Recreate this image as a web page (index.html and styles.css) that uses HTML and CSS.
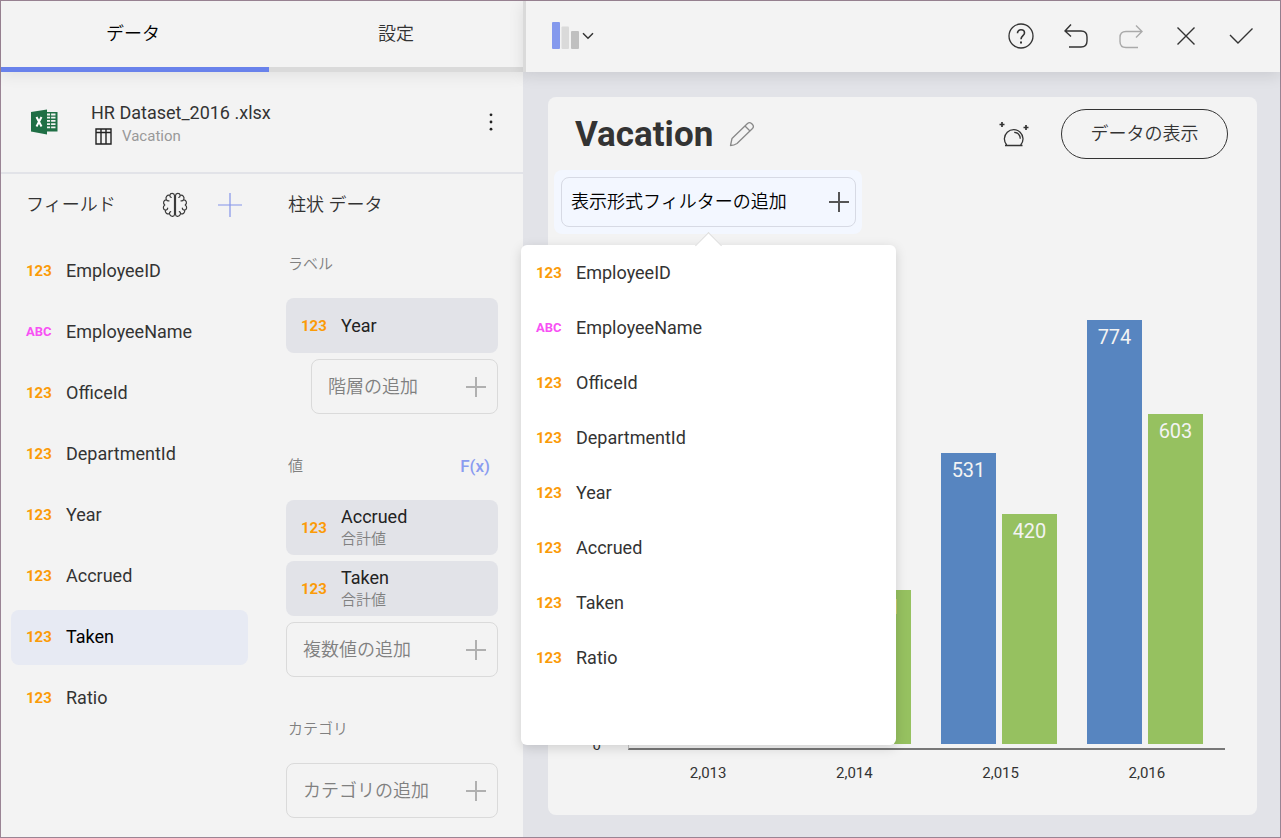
FILE: index.html
```html
<!DOCTYPE html>
<html lang="ja">
<head>
<meta charset="utf-8">
<meta name="viewport" content="width=device-width, initial-scale=1">
<title>Vacation</title>
<link rel="stylesheet" href="styles.css">
</head>
<body>
<svg class="defs" aria-hidden="true">
  <symbol id="plus" viewBox="0 0 20 20"><path d="M10 0V20M0 10H20" fill="none" stroke="currentColor" stroke-width="2"/></symbol>
</svg>
<div class="app">
  <aside class="panel">
    <nav class="tabs">
      <button class="tab tab-active jp" type="button">データ</button>
      <button class="tab jp" type="button">設定</button>
    </nav>

    <section class="source">
      <svg class="excel" viewBox="0 0 27 26" aria-hidden="true">
        <path d="M15 3H26.500V22.500H15Z" fill="#1f6f45"/>
        <path d="M16 5.500H24.500M16 8.700H24.500M16 11.900H24.500M16 15.100H24.500M16 18.300H24.500" stroke="#f3f3f3" stroke-width="1.800"/>
        <path d="M19.600 4V20" stroke="#1f6f45" stroke-width="1"/>
        <path d="M0 3L16 .500V25.500L0 22.500Z" fill="#1f6f45"/>
        <path d="M5.500 8L10.500 17.500M10.500 8L5.500 17.500" stroke="#fff" stroke-width="2"/>
      </svg>
      <div class="source-text">
        <div class="source-name">HR Dataset_2016 .xlsx</div>
        <div class="source-sheet">
          <svg class="sheet-icon" viewBox="0 0 17 17" fill="none" stroke="#222" stroke-width="1.400" aria-hidden="true"><path d="M1 1H16V16H1ZM1 4.500H16M6 1V16M11 1V16"/></svg>
          <span>Vacation</span>
        </div>
      </div>
      <button class="icon-button more" type="button" aria-label="その他">
        <svg viewBox="0 0 4 18" fill="#222"><circle cx="2" cy="1.800" r="1.400"/><circle cx="2" cy="9" r="1.400"/><circle cx="2" cy="16.200" r="1.400"/></svg>
      </button>
    </section>

    <div class="columns">
      <section class="fields">
        <header class="column-head">
          <h2 class="jp">フィールド</h2>
          <button class="icon-button brain" type="button" aria-label="モデル">
            <svg viewBox="0 0 26 26" fill="none" stroke="#3a3a3a" stroke-width="1.200" stroke-linecap="round" stroke-linejoin="round">
              <path id="half" d="M12.500 3.500C12.300 .800 8.300 .800 7.800 3.300C5 2.800 3.200 5.200 4.300 7.600C1.400 8.200 .600 11.500 2.800 13C.600 14.400 1 17.400 3.300 18.200C3 20.800 5 22.400 7.500 21.800C8.300 25 12.300 25 12.500 22.500ZM7.800 3.300C7.800 4.600 8.300 5.300 9.300 5.500M4.300 7.600C4.900 8.700 5.800 9.100 7 8.900M3.300 18.200C4.600 18.200 5.600 17.400 5.700 16M7.500 21.800C7.300 20.700 7.700 19.900 8.700 19.600"/>
              <use href="#half" transform="matrix(-1 0 0 1 26 0)"/>
            </svg>
          </button>
          <button class="icon-button add-field" type="button" aria-label="追加">
            <svg viewBox="0 0 24 24"><path d="M12 0V24M0 12H24" stroke="#8494ea" stroke-width="1.200"/></svg>
          </button>
        </header>
        <ul class="field-list">
          <li class="field"><b class="num">123</b>EmployeeID</li>
          <li class="field"><b class="abc">ABC</b>EmployeeName</li>
          <li class="field"><b class="num">123</b>OfficeId</li>
          <li class="field"><b class="num">123</b>DepartmentId</li>
          <li class="field"><b class="num">123</b>Year</li>
          <li class="field"><b class="num">123</b>Accrued</li>
          <li class="field field-active"><b class="num">123</b>Taken</li>
          <li class="field"><b class="num">123</b>Ratio</li>
        </ul>
      </section>

      <section class="slots">
        <header class="column-head"><h2 class="jp">柱状 データ</h2></header>
        <section class="slot">
          <header class="slot-head"><h3 class="jp">ラベル</h3></header>
          <div class="chip"><b class="num">123</b><span>Year</span></div>
          <button class="add add-indent jp" type="button">階層の追加<svg class="plus"><use href="#plus"/></svg></button>
        </section>
        <section class="slot">
          <header class="slot-head"><h3 class="jp">値</h3><button class="fx" type="button">F(x)</button></header>
          <div class="chip"><b class="num">123</b><span>Accrued<small class="jp">合計値</small></span></div>
          <div class="chip"><b class="num">123</b><span>Taken<small class="jp">合計値</small></span></div>
          <button class="add jp" type="button">複数値の追加<svg class="plus"><use href="#plus"/></svg></button>
        </section>
        <section class="slot">
          <header class="slot-head"><h3 class="jp">カテゴリ</h3></header>
          <button class="add jp" type="button">カテゴリの追加<svg class="plus"><use href="#plus"/></svg></button>
        </section>
      </section>
    </div>
  </aside>

  <main class="stage">
    <header class="toolbar">
      <button class="icon-button chart-type" type="button" aria-label="グラフの種類">
        <svg class="chart-icon" viewBox="0 0 27 27"><rect width="8" height="27" rx="1" fill="#8499ed"/><rect x="9.500" y="4.500" width="7.500" height="22.500" rx="1" fill="#dadada"/><rect x="19" y="9" width="8" height="18" rx="1" fill="#c0c0c0"/></svg>
        <svg class="chevron" viewBox="0 0 12 8" fill="none" stroke="#333" stroke-width="1.500"><path d="M1 1.200L6 6.200L11 1.200"/></svg>
      </button>
      <div class="actions">
        <button class="icon-button" type="button" aria-label="ヘルプ">
          <svg viewBox="0 0 26 26" fill="none" stroke="#333" stroke-width="1.300"><circle cx="13" cy="13" r="12"/><path d="M9.500 10.200C9.500 5.600 16.500 5.800 16.500 10C16.500 12.600 13 12.800 13 16.200" stroke-width="1.600"/><path d="M12 19.500H14" stroke-width="2"/></svg>
        </button>
        <button class="icon-button" type="button" aria-label="元に戻す">
          <svg viewBox="0 0 26 26" fill="none" stroke="#333" stroke-width="1.400"><path d="M8 1.500L2 8L8 13.500M2 8H18Q24 8 24 14V18Q24 24 18 24H6"/></svg>
        </button>
        <button class="icon-button" type="button" aria-label="やり直し" disabled>
          <svg viewBox="0 0 26 26" fill="none" stroke="#aaa" stroke-width="1.400"><path d="M18 2.500L24 8.500L18 14.500M24 8.500H8Q2 8.500 2 14.500V18.500Q2 24.500 8 24.500H20"/></svg>
        </button>
        <button class="icon-button" type="button" aria-label="閉じる">
          <svg viewBox="0 0 26 26" fill="none" stroke="#333" stroke-width="1.400"><path d="M4.500 4.500L21.500 21.500M21.500 4.500L4.500 21.500"/></svg>
        </button>
        <button class="icon-button" type="button" aria-label="完了">
          <svg viewBox="0 0 26 26" fill="none" stroke="#333" stroke-width="1.400"><path d="M2 12L10 20L24.500 5.500"/></svg>
        </button>
      </div>
    </header>

    <section class="card">
      <header class="card-head">
        <h1>Vacation</h1>
        <button class="icon-button pencil" type="button" aria-label="編集">
          <svg viewBox="0 0 26 26" fill="none" stroke="#888" stroke-width="1.300" stroke-linejoin="round"><path d="M1.500 24.500L3 17.500L18.500 2.500Q20.500 .800 22.500 2.500L23.500 3.500Q25.300 5.500 23.500 7.500L8 22.500Q5 24.500 1.500 24.500ZM16 5L21 10"/></svg>
        </button>
        <button class="icon-button orb" type="button" aria-label="インサイト">
          <svg viewBox="0 0 30 26" fill="none" stroke="#333" stroke-width="1.300"><path d="M6 24.500H23.500M7.700 24A9.300 9.300 0 1 1 21.700 24M15.200 11.300A6 6 0 0 1 21.200 17.800"/><path d="M3 1V6M.500 3.500H5.500M27 4V9M24.500 6.500H29.500" stroke-width="1.700"/></svg>
        </button>
        <button class="show-data jp" type="button">データの表示</button>
      </header>

      <div class="filter">
        <button class="filter-add jp" type="button" aria-expanded="true">表示形式フィルターの追加<svg class="plus"><use href="#plus"/></svg></button>
        <div class="popup">
          <button class="option" type="button"><b class="num">123</b>EmployeeID</button>
          <button class="option" type="button"><b class="abc">ABC</b>EmployeeName</button>
          <button class="option" type="button"><b class="num">123</b>OfficeId</button>
          <button class="option" type="button"><b class="num">123</b>DepartmentId</button>
          <button class="option" type="button"><b class="num">123</b>Year</button>
          <button class="option" type="button"><b class="num">123</b>Accrued</button>
          <button class="option" type="button"><b class="num">123</b>Taken</button>
          <button class="option" type="button"><b class="num">123</b>Ratio</button>
        </div>
      </div>

      <div class="chart">
        <div class="y-axis">0</div>
        <div class="plot">
          <div class="group"></div>
          <div class="group">
            <div class="bar"></div>
            <div class="bar bar-green" style="height:35.1%">281</div>
          </div>
          <div class="group">
            <div class="bar bar-blue" style="height:66.4%">531</div>
            <div class="bar bar-green" style="height:52.5%">420</div>
          </div>
          <div class="group">
            <div class="bar bar-blue" style="height:96.8%">774</div>
            <div class="bar bar-green" style="height:75.4%">603</div>
          </div>
        </div>
        <div class="x-axis"><span>2,013</span><span>2,014</span><span>2,015</span><span>2,016</span></div>
      </div>
    </section>
  </main>
</div>
</body>
</html>
```
FILE: styles.css
```css
* { box-sizing: border-box; }

body {
  margin: 0;
  font-family: Roboto, "Noto Sans CJK JP", sans-serif;
  font-size: 18px;
  line-height: 24px;
  color: #333;
}

button {
  margin: 0;
  padding: 0;
  border: 0;
  background: none;
  color: inherit;
  font: inherit;
  text-align: left;
}

h1, h2, h3, ul { margin: 0; padding: 0; font-weight: 400; }
ul { list-style: none; }
svg { display: block; }
.defs { position: absolute; width: 0; height: 0; }
.jp { font-weight: 350; }

.app {
  display: grid;
  grid-template-columns: 522px 1fr;
  min-height: 100vh;
  border: 1px solid #9a8494;
  background: #e2e3e8;
}

.num, .abc {
  width: 40px;
  flex: none;
  font-size: 15px;
  font-weight: 700;
  line-height: 24px;
  color: #fb9b08;
}
.abc { font-size: 13px; color: #f850f4; }

.icon-button {
  display: flex;
  align-items: center;
  justify-content: center;
  width: 26px;
  height: 26px;
}
.icon-button svg { width: 100%; height: 100%; }

/* Left panel */
.panel { display: flex; flex-direction: column; background: #f3f3f3; }

.tabs {
  display: grid;
  grid-template-columns: 268px 1fr;
  height: 71px;
  box-shadow: 0 4px 14px rgba(0, 0, 0, .07);
}
.tab {
  border-bottom: 5px solid #dadada;
  text-align: center;
}
.tab-active { padding-right: 4px; border-color: #6982eb; color: #000; }

.source {
  display: flex;
  align-items: center;
  height: 102px;
  padding: 0 30px;
  border-bottom: 2px solid #e2e3e8;
}
.excel { width: 27px; height: 26px; }
.source-text { flex: 1; padding: 4px 0 0 33px; }
.source-sheet {
  display: flex;
  align-items: center;
  gap: 10px;
  padding-left: 4px;
  font-size: 15px;
  line-height: 22px;
  color: #999;
}
.sheet-icon { width: 17px; height: 17px; }
.more { width: 4px; height: 18px; }

.columns { display: grid; grid-template-columns: 260px 1fr; flex: 1; }
.column-head { display: flex; align-items: center; height: 56px; padding-top: 5px; }
.column-head h2 { font-size: 18px; line-height: 24px; }
.fields .column-head { padding-left: 25px; }
.fields h2 { flex: 1; }
.brain { margin-right: 30px; }
.add-field { width: 24px; height: 24px; margin-right: 19px; }

.field-list {
  display: grid;
  align-content: space-between;
  height: 496px;
  padding: 13px 13px 0 10px;
}
.field {
  display: flex;
  align-items: center;
  height: 55px;
  padding: 0 15px;
  border-radius: 8px;
}
.field-active { background: #e7eaf3; color: #000; }

.slots { padding: 0 25px 18px; }
.slots .column-head { padding-left: 2px; }
.slot { display: grid; gap: 6px; margin-bottom: 18px; }
.slot:last-child { margin-bottom: 0; }
.slot-head {
  display: flex;
  align-items: center;
  justify-content: space-between;
  height: 62px;
  padding: 6px 8px 0 2px;
}
.slot-head h3 { font-size: 15px; line-height: 22px; color: #808080; }
.fx { font-size: 17px; font-weight: 500; color: #8a9cf0; }

.chip {
  display: flex;
  align-items: center;
  height: 55px;
  padding: 0 15px;
  border-radius: 8px;
  background: #e2e3e8;
}
.chip span { line-height: 22px; color: #222; }
.chip small { display: block; font-size: 15px; line-height: 22px; color: #808080; }

.add {
  display: flex;
  align-items: center;
  justify-content: space-between;
  height: 55px;
  padding: 0 11px 0 16px;
  border: 1px solid #dadada;
  border-radius: 8px;
  color: #808080;
}
.add-indent { margin-left: 25px; }
.plus { width: 20px; height: 20px; color: #b0b0b0; }

/* Right side */
.stage { display: flex; flex-direction: column; min-width: 0; }

.toolbar {
  display: flex;
  align-items: center;
  justify-content: space-between;
  height: 71px;
  padding: 0 26px 2px;
  border-left: 3px solid #dadada;
  background: #f3f3f3;
  box-shadow: 0 4px 14px rgba(0, 0, 0, .1);
}
.chart-type { width: 42px; height: 27px; gap: 3px; }
.chart-type .chart-icon { width: 27px; height: 27px; flex: none; }
.chart-type .chevron { width: 12px; height: 8px; }
.actions { display: flex; gap: 29px; }

.card {
  display: flex;
  flex-direction: column;
  flex: 1;
  margin: 25px 23px 22px 25px;
  padding-top: 12px;
  border-radius: 8px;
  background: #f3f3f3;
}

.card-head { display: flex; align-items: center; height: 50px; padding: 0 29px 0 27px; }
.card-head h1 { padding-top: 2px; font-size: 35px; font-weight: 700; line-height: 40px; }
.pencil { margin-left: 16px; }
.orb { width: 30px; margin: 0 32px 0 auto; }
.show-data {
  width: 167px;
  height: 50px;
  border: 1px solid #333;
  border-radius: 25px;
  text-align: center;
}

.filter {
  position: relative;
  width: 308px;
  margin: 11px 0 0 6px;
  padding: 7px 6px 7px 7px;
  border-radius: 8px;
  background: #f3f7ff;
}
.filter-add {
  display: flex;
  align-items: center;
  justify-content: space-between;
  width: 100%;
  height: 50px;
  padding: 0 6px 0 9px;
  border: 1px solid #d7dae4;
  border-radius: 8px;
  color: #000;
}
.filter-add .plus { color: #555; }

.popup {
  position: absolute;
  z-index: 2;
  top: 75px;
  left: 50%;
  width: 375px;
  min-height: 500px;
  margin-left: -187px;
  border-radius: 6px;
  background: #fff;
  box-shadow: 0 3px 12px rgba(0, 0, 0, .15);
}
.popup::before {
  content: "";
  position: absolute;
  top: -9px;
  left: 178px;
  width: 18px;
  height: 18px;
  border: 1px solid #dedede;
  border-width: 1px 0 0 1px;
  background: #fff;
  transform: rotate(45deg);
}
.option {
  position: relative;
  display: flex;
  align-items: center;
  width: 100%;
  height: 55px;
  padding: 0 15px;
}

/* Chart */
.chart {
  display: grid;
  grid-template-columns: 53px 1fr;
  grid-template-rows: 1fr auto;
  flex: 1;
  padding: 72px 32px 30px 27px;
  font-size: 15px;
}
.y-axis { align-self: end; padding: 0 27px 0 0; line-height: 10px; text-align: right; }
.plot {
  display: grid;
  grid-template-columns: repeat(4, 1fr);
  padding: 0 7px 4px 5px;
  border-left: 1px solid #c4c4c4;
  border-bottom: 2px solid #777;
}
.group { display: flex; align-items: flex-end; justify-content: center; gap: 6px; }
.bar {
  width: 55px;
  padding-top: 5px;
  font-size: 20px;
  text-align: center;
  color: #f3f3f3;
}
.bar-blue { background: #5785c0; }
.bar-green { background: #96c160; }
.x-axis {
  grid-column: 2;
  display: grid;
  grid-template-columns: repeat(4, 1fr);
  padding: 11px 5px 0 7px;
  text-align: center;
}
```
